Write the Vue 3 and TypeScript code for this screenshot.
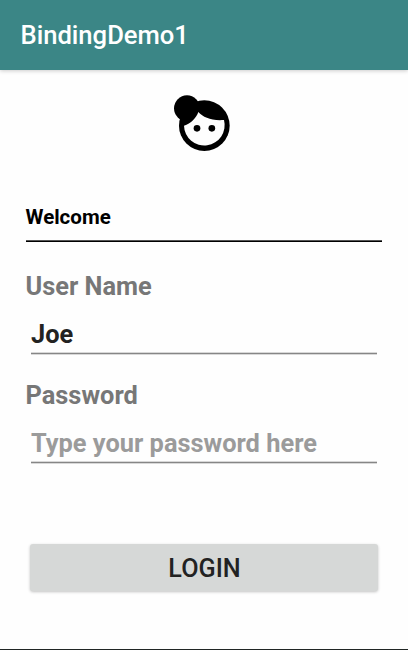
<script setup lang="ts">
import { ref } from 'vue'

const userName = ref<string>('Joe')
const password = ref<string>('')
</script>

<template>
  <div class="screen">
    <header class="app-bar"><h1 class="title">BindingDemo1</h1></header>
    <main class="content">
      <svg class="avatar" viewBox="0 0 264 228" aria-hidden="true">
        <circle cx="81" cy="70" r="39" />
        <circle cx="133" cy="122" r="76" />
        <path class="face" d="M115 81C130 97 154 108 192 105A61 61 0 1 1 72 122C93 115 109 99 115 81Z" />
        <circle cx="111" cy="130" r="10" />
        <circle cx="155.500" cy="130" r="10" />
      </svg>
      <h2 class="welcome"><span>Welcome</span></h2>
      <form class="form" @submit.prevent>
        <label class="label" for="user">User Name</label>
        <input id="user" v-model="userName" class="field" type="text" />
        <label class="label second" for="pass">Password</label>
        <input id="pass" v-model="password" class="field" type="password" placeholder="Type your password here" />
        <button class="login" type="submit">LOGIN</button>
      </form>
    </main>
  </div>
</template>

<style>
body {
  margin: 0;
  background: #fefefe;
}
</style>

<style scoped>
.screen {
  box-sizing: border-box;
  display: flex;
  flex-direction: column;
  height: 650px;
  background: #fefefe;
  border-bottom: 1px solid #202624;
  font-family: Roboto, sans-serif;
  overflow: hidden;
}
.app-bar {
  flex: none;
  display: flex;
  align-items: center;
  height: 70px;
  padding-left: 20.5px;
  box-sizing: border-box;
  background: #3b8686;
  box-shadow: 0 1px 4px rgba(0, 0, 0, 0.2);
}
.title {
  margin: 0;
  color: #fff;
  font-size: 25.6px;
  font-weight: 500;
}
.content {
  display: flex;
  flex-direction: column;
  padding: 15px 26px 0;
}
.avatar {
  width: 88px;
  height: 76px;
  margin-left: 134px;
}
.face {
  fill: #fefefe;
}
.welcome {
  display: flex;
  align-items: center;
  box-sizing: border-box;
  height: 48px;
  margin: 33px 0 0;
  padding-bottom: 2px;
  border-bottom: 1px solid #000;
  box-shadow: inset 0 -1px #555;
  color: #000;
  font-size: 20.5px;
  font-weight: 700;
}
.welcome span {
  margin-left: -0.5px;
}
.form {
  display: flex;
  flex-direction: column;
}
.label {
  height: 30px;
  margin: 29px 0 0 -0.5px;
  color: #777;
  font-size: 25.4px;
  font-weight: 700;
  line-height: 30px;
}
.second {
  margin-top: 26px;
}
.field {
  box-sizing: border-box;
  height: 41px;
  margin: 12px 5px 0;
  padding: 2px 0 0;
  border: 0;
  border-bottom: 1px solid #868686;
  border-radius: 0;
  outline: 0;
  background: transparent;
  box-shadow: 0 1px #d8d8d8, inset 0 -1px #d8d8d8;
  color: #222;
  font: 700 25.4px Roboto, sans-serif;
}
.field::placeholder {
  color: #9b9b9b;
  opacity: 1;
}
.login {
  height: 47px;
  margin: 81px 4px 0;
  padding: 1px 0 0 1px;
  border: 0;
  border-radius: 3px;
  background: #d6d8d7;
  box-shadow: 0 1px 3px rgba(0, 0, 0, 0.24);
  color: #222;
  font: 500 25.2px Roboto, sans-serif;
}
</style>
